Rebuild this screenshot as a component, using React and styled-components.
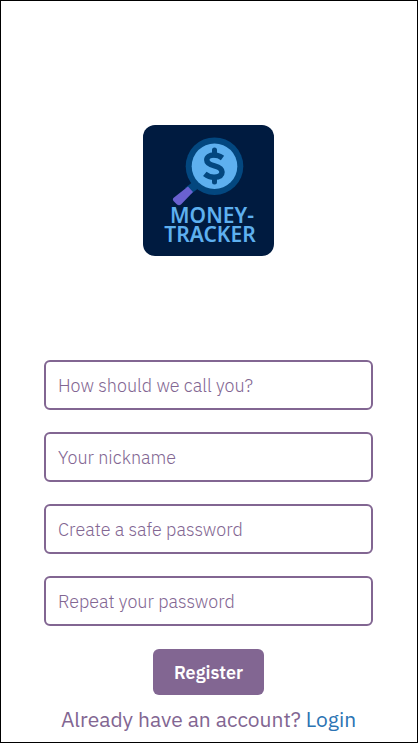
import React from "react";
import styled, { createGlobalStyle } from "styled-components";

const GlobalStyle = createGlobalStyle`
  *, *::before, *::after { box-sizing: border-box; }
  body { margin: 0; background: #ffffff; }
  body, input, button { font-family: "IBM Plex Sans", Roboto, sans-serif; }
`;

const Page = styled.main`
  display: flex;
  flex-direction: column;
  align-items: center;
  min-height: 100vh;
  padding: 124px 44px 0 43px;
  border: 1px solid #000000;
  background: #ffffff;
`;

const Logo = styled.svg`
  display: block;
  flex: none;
  width: 131px;
  height: 131px;
  margin-bottom: 104px;
`;

const LogoText = styled.text`
  fill: #5eb0ef;
  font-family: "Noto Sans", sans-serif;
  font-size: 21px;
  font-weight: 600;
  text-anchor: middle;
`;

const Form = styled.form`
  display: flex;
  flex-direction: column;
  align-items: center;
  gap: 23px;
  width: 100%;
`;

const FieldList = styled.div`
  display: grid;
  gap: 22px;
  width: 100%;
`;

const Field = styled.input`
  width: 100%;
  height: 50px;
  padding: 0 12px;
  border: 2px solid #826692;
  border-radius: 6px;
  background: #ffffff;
  color: #826692;
  font-size: 18px;
  font-weight: 300;

  &::placeholder {
    color: #826692;
    opacity: 1;
  }
`;

const SubmitButton = styled.button`
  height: 46px;
  padding: 0 21px;
  border: 0;
  border-radius: 6px;
  background: #826692;
  color: #ffffff;
  font-size: 18px;
  font-weight: 600;
  cursor: pointer;
`;

const Footer = styled.p`
  margin: 10px 0 0;
  color: #826692;
  font-size: 21px;
  line-height: 28px;
  white-space: nowrap;
`;

const LoginLink = styled.a`
  color: #2b74b3;
  text-decoration: none;
`;

const fields = [
  { name: "name", type: "text", label: "How should we call you?" },
  { name: "nickname", type: "text", label: "Your nickname" },
  { name: "password", type: "password", label: "Create a safe password" },
  { name: "repeat", type: "password", label: "Repeat your password" },
];

function BrandLogo() {
  return (
    <Logo viewBox="0 0 131 131" role="img" aria-label="Money-Tracker">
      <rect width="131" height="131" rx="12" fill="#001b40" />
      <path d="M51 56 L57 62 L48 69 L42 63 Z" fill="#03477f" />
      <path d="M45 61.5 L50 67 L38 79.500 Q36 81 34 79.500 L30.500 76 Q29 74 31 72.500 Z" fill="#6a61d0" />
      <circle cx="71.500" cy="41.200" r="28.800" fill="#03477f" />
      <circle cx="71.500" cy="41.200" r="22.800" fill="#5eb0ef" />
      <path
        d="M79.500 33 C76.500 30.800 74.500 30 71 30 C66.500 30 63.800 32 63.800 35 C63.800 38.500 67 39.700 71.500 40.800 C76 42 79 43.500 79 47 C79 50.500 76 52.200 71 52.200 C67.500 52.200 64.500 51 61.800 48.800"
        fill="none" stroke="#03477f" strokeWidth="5.500"
      />
      <path d="M71.500 25 V30 M71.500 53 V57" stroke="#03477f" strokeWidth="5" strokeLinecap="round" />
      <LogoText>
        <tspan x="69" y="98">MONEY-</tspan>
        <tspan x="67" y="117">TRACKER</tspan>
      </LogoText>
    </Logo>
  );
}

export default function App() {
  return (
    <>
      <GlobalStyle />
      <Page>
        <BrandLogo />
        <Form onSubmit={(event) => event.preventDefault()}>
          <FieldList>
            {fields.map(({ name, type, label }) => (
              <Field key={name} name={name} type={type} placeholder={label} aria-label={label} />
            ))}
          </FieldList>
          <SubmitButton type="submit">Register</SubmitButton>
        </Form>
        <Footer>
          Already have an account? <LoginLink href="#login">Login</LoginLink>
        </Footer>
      </Page>
    </>
  );
}
